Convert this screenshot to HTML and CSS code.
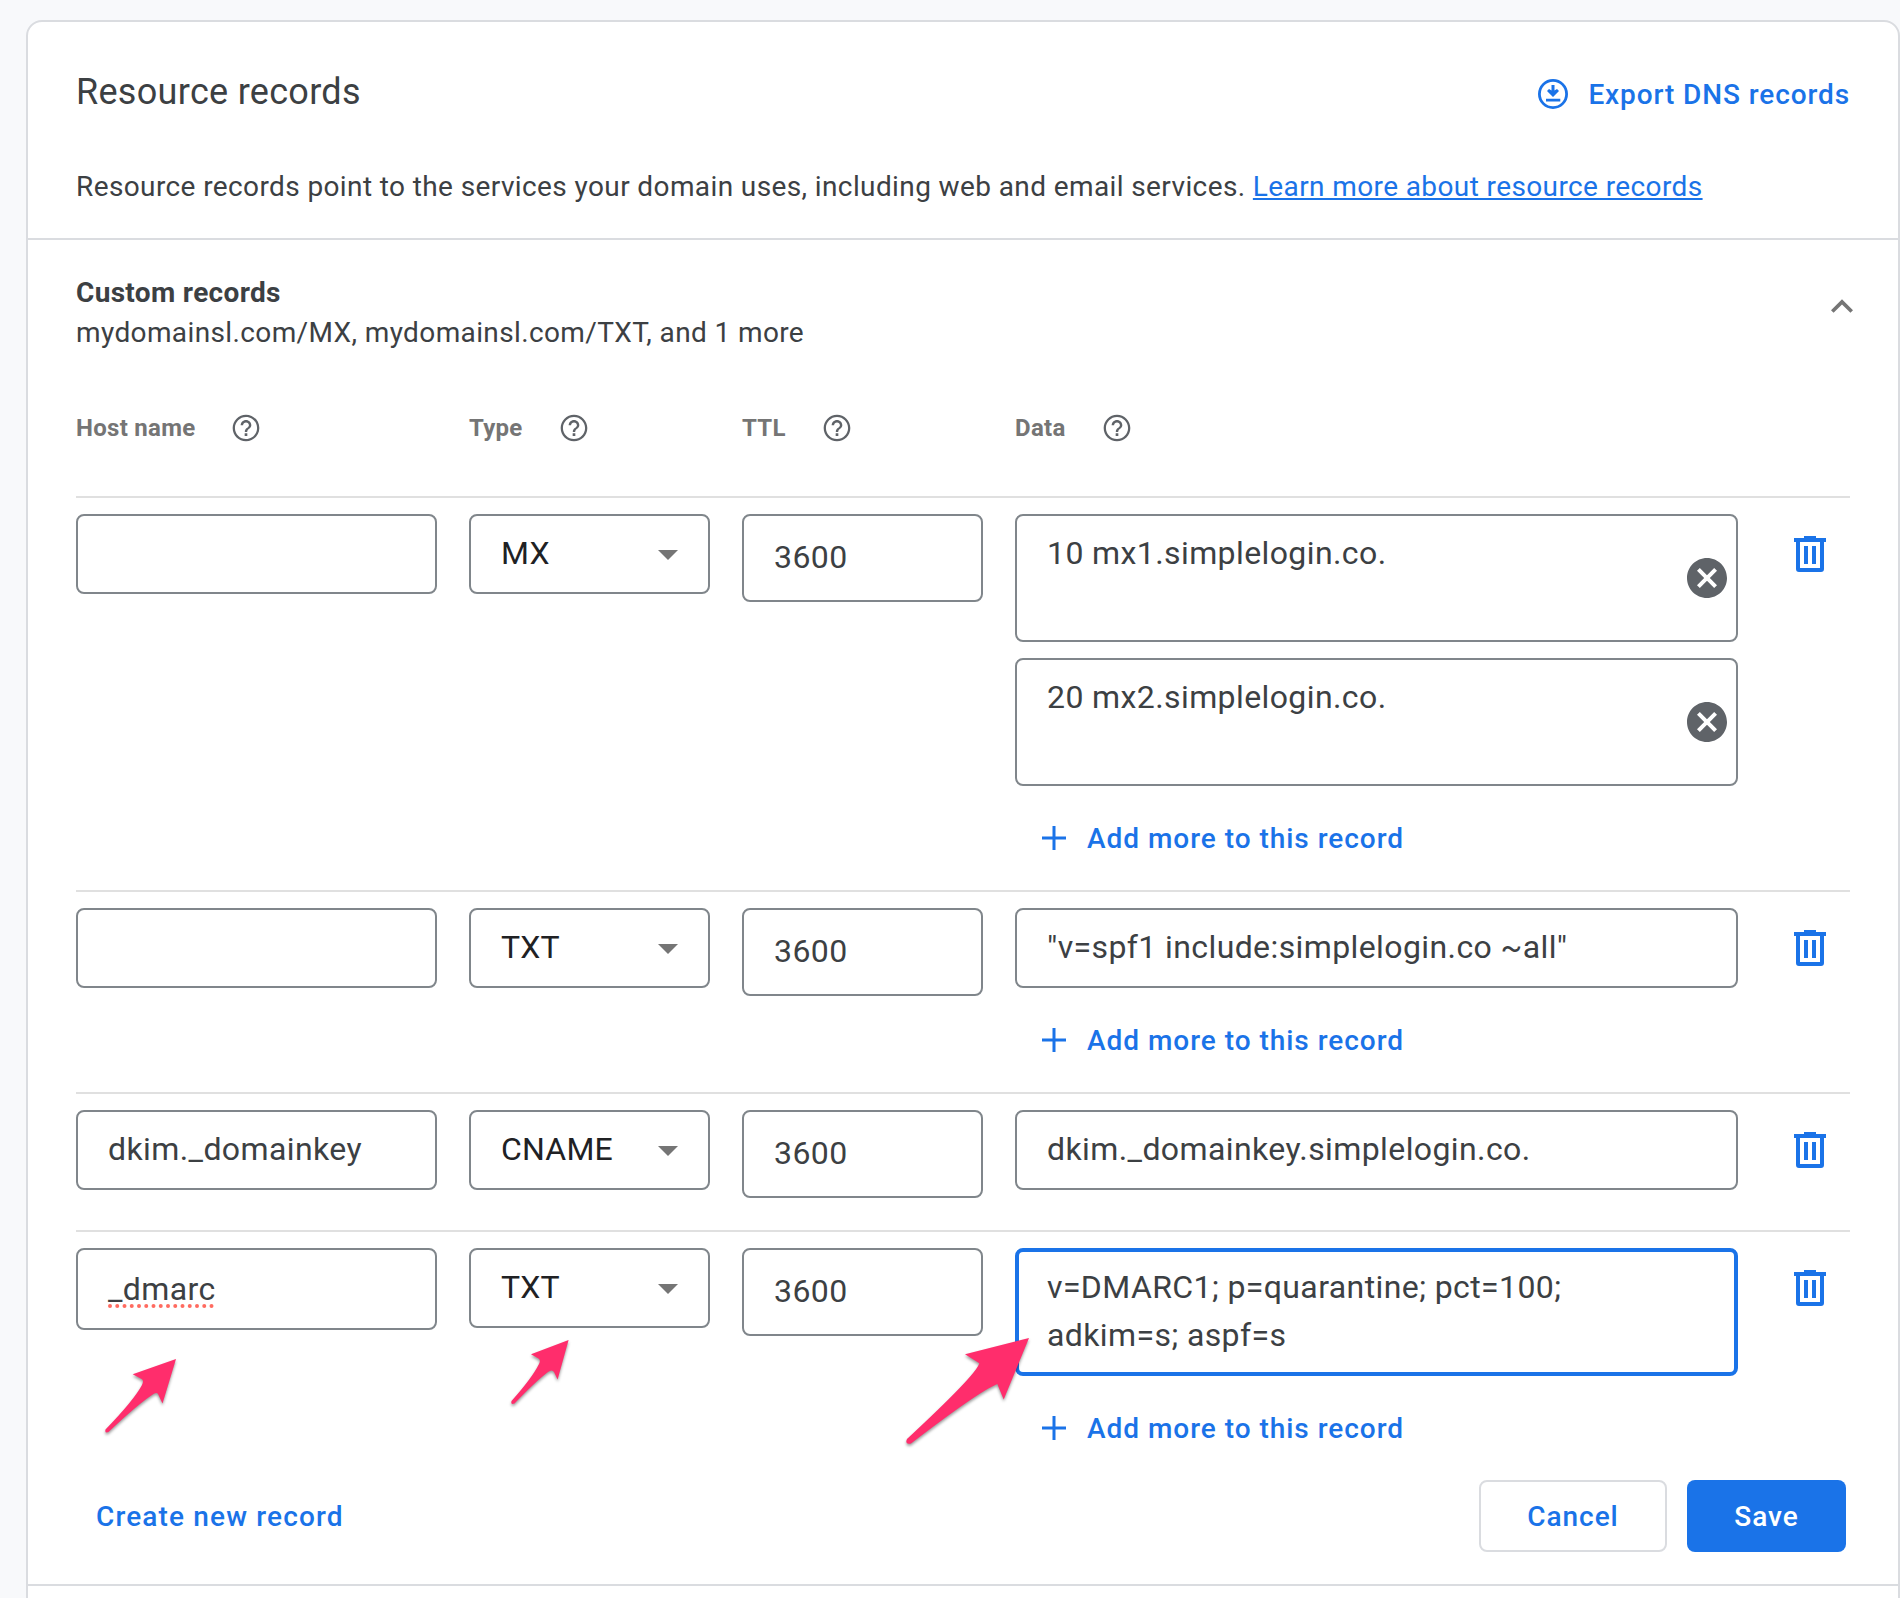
FILE: index.html
```html
<!DOCTYPE html>
<html lang="en">
<head>
<meta charset="utf-8">
<title>Resource records</title>
<link rel="stylesheet" href="styles.css">
</head>
<body>
<svg class="defs" width="0" height="0" aria-hidden="true">
  <symbol id="i-help" viewBox="0 0 24 24"><path d="M11 18h2v-2h-2v2zm1-16C6.480 2 2 6.480 2 12s4.480 10 10 10 10-4.480 10-10S17.520 2 12 2zm0 18.300c-4.580 0-8.300-3.720-8.300-8.300S7.420 3.700 12 3.700s8.300 3.720 8.300 8.300-3.720 8.300-8.300 8.300zM12 6c-2.210 0-4 1.790-4 4h1.800c0-1.210.99-2.200 2.200-2.200s2.200.99 2.200 2.200c0 2-3.100 1.750-3.100 5h1.800c0-2.250 3.100-2.500 3.100-5 0-2.210-1.790-4-4-4z"/></symbol>
  <symbol id="i-trash" viewBox="0 0 32 36"><path fill-rule="evenodd" d="M10 0h12v2h10v4h-2v27a3 3 0 0 1-3 3H5a3 3 0 0 1-3-3V6H0V2h10zM6 6v26h20V6zM10 10h4v18h-4zM18 10h4v18h-4z"/></symbol>
  <symbol id="i-cancel" viewBox="2 2 20 20"><path d="M12 2C6.470 2 2 6.470 2 12s4.470 10 10 10 10-4.470 10-10S17.530 2 12 2zm5 13.590L15.590 17 12 13.410 8.410 17 7 15.590 10.590 12 7 8.410 8.410 7 12 10.590 15.590 7 17 8.410 13.410 12 17 15.590z"/></symbol>
  <symbol id="i-plus" viewBox="0 0 24 24"><path d="M10.500 0h3v10.500H24v3H13.500V24h-3V13.500H0v-3h10.500z"/></symbol>
</svg>

<main class="card">
  <header class="card-head">
    <div class="title-row">
      <h1>Resource records</h1>
      <a class="export">
        <svg width="30" height="30" viewBox="0 0 30 30"><circle cx="15" cy="15" r="13.600" fill="none" stroke="currentColor" stroke-width="2.800"/><path fill="currentColor" d="M13.500 6h3v5.500L19 10l2 2-6 5.900L9 12l2-2 2.500 1.500zM8 19.700h14.300v2.700H8z"/></svg>
        <span>Export DNS records</span>
      </a>
    </div>
    <p class="intro">Resource records point to the services your domain uses, including web and email services. <a>Learn more about resource records</a></p>
  </header>

  <section class="custom">
    <div class="section-head">
      <div class="section-title">
        <h2>Custom records</h2>
        <p>mydomainsl.com/MX, mydomainsl.com/TXT, and 1 more</p>
      </div>
      <svg class="chevron" width="22" height="14" viewBox="6 8 12 7.410"><path d="M12 8l-6 6 1.410 1.410L12 10.830l4.590 4.580L18 14z"/></svg>
    </div>

    <div class="grid labels">
      <div><span>Host name</span><svg><use href="#i-help"/></svg></div>
      <div><span>Type</span><svg><use href="#i-help"/></svg></div>
      <div><span>TTL</span><svg><use href="#i-help"/></svg></div>
      <div><span>Data</span><svg><use href="#i-help"/></svg></div>
    </div>

    <div class="grid record">
      <div class="field"></div>
      <div class="field select"><span>MX</span><i class="caret"></i></div>
      <div class="field ttl">3600</div>
      <div class="data">
        <div class="field area"><span>10 mx1.simplelogin.co.</span><svg class="clear"><use href="#i-cancel"/></svg></div>
        <div class="field area"><span>20 mx2.simplelogin.co.</span><svg class="clear"><use href="#i-cancel"/></svg></div>
        <a class="add"><svg><use href="#i-plus"/></svg><span>Add more to this record</span></a>
      </div>
      <svg class="trash"><use href="#i-trash"/></svg>
    </div>

    <div class="grid record">
      <div class="field"></div>
      <div class="field select"><span>TXT</span><i class="caret"></i></div>
      <div class="field ttl">3600</div>
      <div class="data">
        <div class="field">"v=spf1 include:simplelogin.co ~all"</div>
        <a class="add"><svg><use href="#i-plus"/></svg><span>Add more to this record</span></a>
      </div>
      <svg class="trash"><use href="#i-trash"/></svg>
    </div>

    <div class="grid record short">
      <div class="field">dkim._domainkey</div>
      <div class="field select"><span>CNAME</span><i class="caret"></i></div>
      <div class="field ttl">3600</div>
      <div class="data">
        <div class="field">dkim._domainkey.simplelogin.co.</div>
      </div>
      <svg class="trash"><use href="#i-trash"/></svg>
    </div>

    <div class="grid record">
      <div class="field edited"><span class="misspelt">_dmarc<svg class="dots" width="108" height="4"><line x1="2" y1="2" x2="108" y2="2"/></svg></span></div>
      <div class="field select"><span>TXT</span><i class="caret"></i></div>
      <div class="field ttl">3600</div>
      <div class="data">
        <div class="field area focused">v=DMARC1; p=quarantine; pct=100;<br>adkim=s; aspf=s</div>
        <a class="add"><svg><use href="#i-plus"/></svg><span>Add more to this record</span></a>
      </div>
      <svg class="trash"><use href="#i-trash"/></svg>
    </div>

    <footer class="actions">
      <a class="create">Create new record</a>
      <a class="btn cancel">Cancel</a>
      <a class="btn save">Save</a>
    </footer>
  </section>
</main>

<svg class="arrows" width="1900" height="1598" viewBox="0 0 1900 1598" aria-hidden="true">
  <path d="M176 1359L132.700 1374.300L142 1379.300Q144 1381 142 1385Q134 1400 105.500 1429.500Q104.500 1433.500 108.500 1432Q137 1405 152 1395Q156.500 1391.500 158 1394L162.500 1403.500Z"/>
  <path d="M568.600 1340L531 1354.300L538.500 1358.500Q541 1360 539 1364Q532 1378 511.500 1401Q510.500 1405 514.500 1403.500Q536 1381 548 1372Q552 1369 554 1372L557.600 1379.500Z"/>
  <path d="M1029 1338L965 1354.300L979.300 1363.300Q977 1374 907 1439Q904.500 1445 911 1443.500Q978 1392 997.300 1384L1003.700 1399.500Z"/>
</svg>
</body>
</html>
```
FILE: styles.css
```css
* { box-sizing: border-box; }
body {
  margin: 0;
  height: 1598px;
  padding: 20px 0 0 26px;
  overflow: hidden;
  background: #f8f9fb;
  color: #3c4043;
  font-family: Roboto, "Liberation Sans", sans-serif;
  font-size: 28px;
}
h1, h2, p { margin: 0; }
.defs { position: absolute; }

.card {
  width: 1874px;
  height: 1620px;
  border: 2px solid #dadce0;
  border-radius: 16px;
  background: #fff;
}
.card-head {
  height: 218px;
  border-bottom: 2px solid #dadce0;
  padding: 48px 48px 0;
}
.title-row {
  display: flex;
  justify-content: space-between;
  height: 48px;
}
h1 { font-size: 36px; font-weight: 400; line-height: 44px; letter-spacing: .3px; }
.export, .add, .create, .btn {
  color: #1a73e8;
  font-weight: 500;
}
.export { display: flex; align-items: center; gap: 20px; letter-spacing: .9px; }
.intro { margin-top: 49px; line-height: 40px; letter-spacing: .39px; white-space: nowrap; }
.intro a { color: #1a73e8; text-decoration: underline; }

.custom { padding: 32px 48px 0; height: 1346px; border-bottom: 2px solid #dadce0; }
.section-head { display: flex; justify-content: space-between; height: 116px; line-height: 40px; letter-spacing: .38px; }
.section-title { padding-top: 1px; }
h2 { font-size: 28px; font-weight: 700; line-height: 40px; letter-spacing: .33px; }
.chevron { margin: 27px -3px 0 0; fill: #757575; }

.grid {
  display: grid;
  grid-template-columns: 361px 241px 241px 723px 1fr;
  column-gap: 32px;
  align-items: start;
}
.labels { height: 108px; color: #757575; font-size: 24px; font-weight: 700; letter-spacing: .28px; }
.labels div { display: flex; align-items: center; gap: 35px; height: 80px; }
.labels svg { width: 32px; height: 32px; fill: #5f6368; }

.record { border-top: 2px solid #e0e0e0; padding-top: 16px; }
.short { height: 138px; }
.field {
  min-height: 80px;
  padding: 13px 30px 0;
  border: 2px solid #80868b;
  border-radius: 8px;
  font-size: 32px;
  line-height: 48px;
  letter-spacing: .4px;
  white-space: nowrap;
}
.select { display: flex; color: #202124; justify-content: space-between; letter-spacing: .2px; }
.caret {
  width: 20px;
  height: 10px;
  margin-top: 21px;
  background: #757575;
  clip-path: polygon(0 0, 100% 0, 50% 100%);
}
.ttl { min-height: 88px; padding-top: 17px; }
.area { height: 128px; }
.area + .area { margin-top: 16px; }
.area:has(.clear) { display: flex; justify-content: space-between; padding-right: 9px; }
.clear { width: 40px; height: 40px; margin-top: 29px; fill: #5f6368; }
.edited { min-height: 82px; padding-top: 15px; }
.misspelt { position: relative; }
.dots {
  position: absolute;
  left: 0;
  top: 34px;
  stroke: #ff6b60;
  stroke-width: 4;
  stroke-linecap: round;
  stroke-dasharray: 0 7.250;
}
.focused { border: 4px solid #1a73e8; padding: 11px 28px 0; }
.add { display: flex; align-items: center; gap: 21px; height: 104px; padding-left: 27px; letter-spacing: .97px; }
.add svg { width: 24px; height: 24px; fill: #1a73e8; }
.trash { width: 32px; height: 36px; margin: 22px 0 0 24px; fill: #1a73e8; }

.actions { display: flex; align-items: center; height: 72px; padding: 0 4px 0 20px; }
.create { margin-right: auto; letter-spacing: 1.15px; }
.btn {
  display: flex;
  align-items: center;
  justify-content: center;
  height: 72px;
  border-radius: 8px;
  letter-spacing: .95px;
}
.cancel { width: 188px; border: 2px solid #dadce0; margin-right: 20px; }
.save { width: 159px; background: #1a73e8; color: #fff; }

.arrows {
  position: absolute;
  left: 0;
  top: 0;
  fill: #ff2d6c;
  filter: drop-shadow(0 2px 1.500px rgba(0, 0, 0, .4));
}
```
